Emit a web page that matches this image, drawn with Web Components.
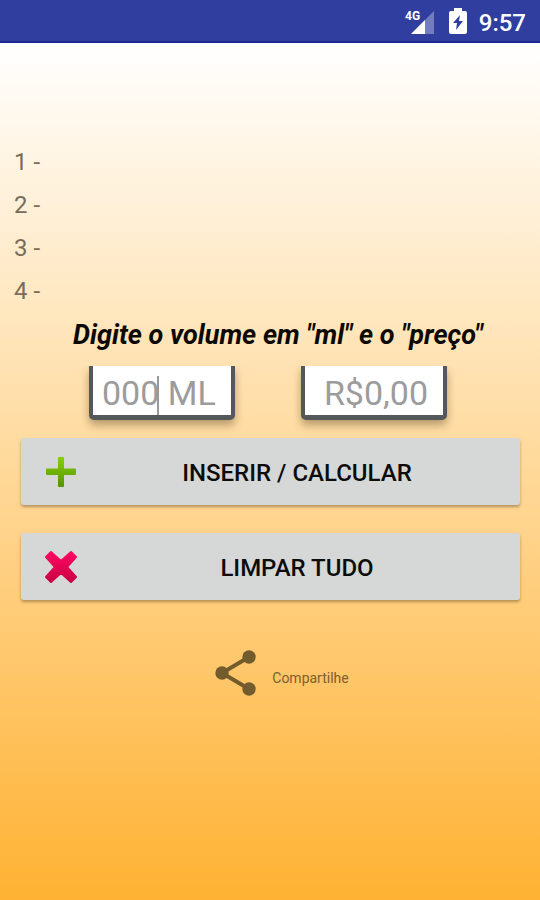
<!DOCTYPE html>
<html lang="pt-BR">
<head>
<meta charset="utf-8">
<meta name="viewport" content="width=device-width, initial-scale=1">
<title>Calculadora de volume e preço</title>
<style>
html, body { margin: 0; min-height: 100%; }
body { font-family: Roboto, "Liberation Sans", sans-serif; }
</style>
</head>
<body>
<volume-app></volume-app>
<script>
const define = (name, markup) => {
  const template = document.createElement('template');
  template.innerHTML = markup;
  customElements.define(name, class extends HTMLElement {
    constructor() {
      super();
      this.attachShadow({ mode: 'open' }).append(template.content.cloneNode(true));
    }
  });
};

define('status-bar', `
<style>
:host { display: flex; align-items: center; justify-content: flex-end; box-sizing: border-box; height: 43px; padding: 0 14px 0 0;
  background: #303f9f; border-bottom: 2px solid #1c2893; color: #fff; }
svg { display: block; }
.signal { margin-right: 14px; }
.battery { margin-right: 12px; }
.net { font: 700 12px/12px "Roboto", sans-serif; }
time { font-size: 24px; font-weight: 500; line-height: 28px; padding-top: 4px; }
</style>
<svg class="signal" width="30" height="26" viewBox="0 0 30 26" aria-label="4G">
  <path d="M29 3V26H6Z" fill="#fff" fill-opacity=".32"/>
  <path d="M20 12V26H6Z" fill="#fff"/>
  <text class="net" x="0" y="12" fill="#fff">4G</text>
</svg>
<svg class="battery" width="18" height="26" viewBox="0 0 18 26" aria-hidden="true">
  <path fill="#fff" fill-rule="evenodd" d="M5 0H13V3H16Q18 3 18 5V24Q18 26 16 26H2Q0 26 0 24V5Q0 3 2 3H5ZM11 7L4 15H8L7 22L14 13H10Z"/>
</svg>
<time>9:57</time>`);

define('result-list', `
<style>
:host { display: block; }
ul { margin: 0; padding: 0; list-style: none; }
::slotted(li) { list-style: none; font-size: 24px; line-height: 28px; margin-bottom: 15px; color: #7a6c58; }
</style>
<ul><slot></slot></ul>`);

customElements.define('value-field', class extends HTMLElement {
  connectedCallback() {
    this.attachShadow({ mode: 'open' }).innerHTML = `
<style>
:host { display: block; position: relative; width: 146px; }
input { display: block; box-sizing: border-box; width: 100%; height: 54px; margin: 0; padding: 5px 8px 0 9px; border: solid #55585b;
  border-width: 0 4px 5px; border-radius: 0 0 5px 5px; background: #fff; background-clip: padding-box; outline: none; font: 34px/40px Roboto, sans-serif;
  box-shadow: 0 5px 8px rgba(70, 50, 20, .4); clip-path: inset(0 -12px -20px); color: #333; caret-color: #999; }
:host([align="end"]) input { text-align: right; padding-right: 15px; }
input::placeholder { color: #9c9c9c; opacity: 1; }
.caret { display: none; position: absolute; left: 68px; top: 10px; width: 2px; height: 39px; background: #999; }
:host([active]) .caret { display: block; }
</style>
<input type="text" inputmode="decimal"><span class="caret"></span>`;
    const input = this.shadowRoot.querySelector('input');
    input.placeholder = this.getAttribute('placeholder');
    input.setAttribute('aria-label', this.getAttribute('label'));
  }
});

define('action-button', `
<style>
:host { display: block; }
button { display: flex; align-items: center; width: 100%; height: 67px; margin: 0; padding: 0 3px 0 24px; border: 0; border-radius: 3px;
  background: #d6d7d7; color: #0c0c0c; font: 500 24px/28px Roboto, sans-serif; box-shadow: 0 2px 3px rgba(70, 50, 20, .4); cursor: pointer; }
.label { flex: 1; text-align: center; padding-top: 2px; }
::slotted(svg) { display: block; width: 32px; height: 32px; }
</style>
<button type="button"><slot name="icon"></slot><span class="label"><slot></slot></span></button>`);

define('share-link', `
<style>
:host { display: flex; justify-content: center; }
a { display: flex; align-items: center; gap: 15px; color: #7b6030; text-decoration: none; font-size: 14px; line-height: 18px; }
svg { display: block; }
span { padding-top: 10px; }
</style>
<a href="#compartilhar">
<svg width="42" height="46" viewBox="0 0 42 46" aria-hidden="true">
  <path d="M34 7L7 23L34 39" fill="none" stroke="#725b2c" stroke-width="4"/>
  <g fill="#725b2c"><circle cx="34" cy="7" r="6.7"/><circle cx="7" cy="23" r="6.7"/><circle cx="34" cy="39" r="6.7"/></g>
</svg><span><slot></slot></span></a>`);

define('volume-app', `
<style>
:host { display: flex; flex-direction: column; min-height: 100vh; background: linear-gradient(#fff 42px, #ffb233); }
main { display: flex; flex-direction: column; padding: 105px 0 24px; }
result-list { padding: 0 14px; }
h1 { margin: 0 0 16px; padding-left: 16px; text-align: center; font-size: 27px; line-height: 30px; font-weight: 700; font-style: italic; color: #0c0904; }
.fields { display: flex; justify-content: center; gap: 66px; padding-right: 4px; }
.actions { display: grid; gap: 28px; padding: 18px 20px 0 21px; }
share-link { margin-top: 50px; padding-left: 24px; }
</style>
<status-bar></status-bar>
<main>
  <result-list><li>1 -</li><li>2 -</li><li>3 -</li><li>4 -</li></result-list>
  <h1>Digite o volume em "ml" e o "preço"</h1>
  <div class="fields">
    <value-field active placeholder="000 ML" label="Volume em ml"></value-field>
    <value-field align="end" placeholder="R$0,00" label="Preço"></value-field>
  </div>
  <div class="actions">
    <action-button>
      <svg slot="icon" viewBox="0 0 32 32" aria-hidden="true">
        <defs><linearGradient id="g" x2="0" y2="1"><stop stop-color="#86d00b"/><stop offset="1" stop-color="#559300"/></linearGradient></defs>
        <path fill="url(#g)" d="M14 1H18Q19 1 19 2V12.500H30Q31 12.500 31 13.500V18Q31 19 30 19H19V30Q19 31 18 31H14Q13 31 13 30V19H2Q1 19 1 18V13.500Q1 12.500 2 12.500H13V2Q13 1 14 1Z"/>
      </svg>INSERIR / CALCULAR
    </action-button>
    <action-button>
      <svg slot="icon" viewBox="0 0 32 32" aria-hidden="true">
        <defs><linearGradient id="r" x2="0" y2="1"><stop stop-color="#ff0763"/><stop offset="1" stop-color="#c90043"/></linearGradient></defs>
        <path fill="url(#r)" stroke="url(#r)" stroke-width="2" stroke-linejoin="round" d="M6 1L16 10L26 1L31 6L22 16L31 26L26 31L16 22L6 31L1 26L10 16L1 6Z"/>
      </svg>LIMPAR TUDO
    </action-button>
  </div>
  <share-link>Compartilhe</share-link>
</main>`);
</script>
</body>
</html>
